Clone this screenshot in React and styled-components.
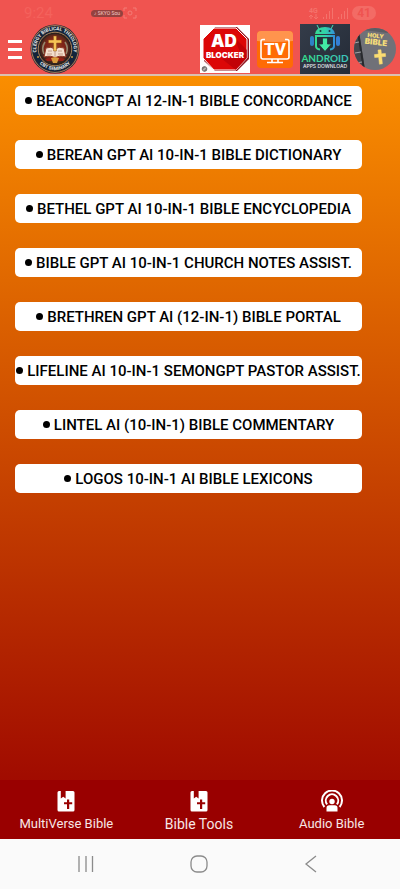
import React, { useState } from "react";
import styled, { createGlobalStyle } from "styled-components";

const tools = [
  "BEACONGPT AI 12-IN-1 BIBLE CONCORDANCE",
  "BEREAN GPT AI 10-IN-1 BIBLE DICTIONARY",
  "BETHEL GPT AI 10-IN-1 BIBLE ENCYCLOPEDIA",
  "BIBLE GPT AI 10-IN-1 CHURCH NOTES ASSIST.",
  "BRETHREN GPT AI (12-IN-1) BIBLE PORTAL",
  "LIFELINE AI 10-IN-1 SEMONGPT PASTOR ASSIST.",
  "LINTEL AI (10-IN-1) BIBLE COMMENTARY",
  "LOGOS 10-IN-1 AI BIBLE LEXICONS",
];

const SealLogo = () => (
  <svg width="50" height="50" viewBox="0 0 50 50" aria-label="Seminary seal">
    <defs>
      <path id="sealTop" d="M7.2 31 A18.8 18.8 0 1 1 42.8 31" />
      <path id="sealBottom" d="M6 35 A21.8 21.8 0 0 0 44 35" />
      <radialGradient id="sealGlow" cx="50%" cy="45%" r="55%">
        <stop offset="0" stopColor="#d99a34" />
        <stop offset="0.5" stopColor="#8a2a18" />
        <stop offset="1" stopColor="#33221c" />
      </radialGradient>
    </defs>
    <circle cx="25" cy="25" r="24.5" fill="#2b2a33" />
    <circle cx="25" cy="25" r="23.4" fill="none" stroke="#b88763" strokeWidth="0.9" />
    <circle cx="25" cy="25" r="22.4" fill="#14243a" />
    <circle cx="25" cy="25" r="16.8" fill="#2d211d" stroke="#a9825a" strokeWidth="1" />
    <circle cx="25" cy="25" r="15" fill="url(#sealGlow)" />
    <path d="M13 21 Q25 6 37 21 L34 34 H16 Z" fill="#7c2418" opacity="0.7" />
    <path d="M15 18 q-4 6 -1 12 M35 18 q4 6 1 12" fill="none" stroke="#94866c" strokeWidth="1.6" />
    <path d="M14 33 L16 24 Q21 22 25 25 Q29 22 34 24 L36 33 Q29 31 25 34 Q21 31 14 33Z" fill="#f3dfce" stroke="#8e3826" strokeWidth="1" />
    <path d="M25 25 V33 M18 27 l4 0 M17 30 l5 0 M28 27 l4 0 M28 30 l5 0" stroke="#b78975" strokeWidth="0.8" />
    <path d="M23.5 12 h3 v4 h5 v3 h-5 v8 h-3 v-8 h-5 v-3 h5z" fill="#f6c455" stroke="#92521c" strokeWidth="0.5" />
    <path d="M15 35 q10 -4 20 0 l-2 2 h-16z" fill="#942016" />
    <path d="M21 34 l4 -1 4 1 -2 5 h-4z" fill="#d99c3d" />
    <circle cx="8" cy="33" r="1" fill="#c69a4a" />
    <circle cx="42" cy="33" r="1" fill="#c69a4a" />
    <text fontSize="4.8" fontWeight="700" fill="#e8e9e6">
      <textPath href="#sealTop" startOffset="50%" textAnchor="middle">CLERGY BIBLICAL THEOLOGY</textPath>
    </text>
    <text fontSize="4.8" fontWeight="700" fill="#e8e9e6">
      <textPath href="#sealBottom" startOffset="50%" textAnchor="middle">CBT SEMINARY</textPath>
    </text>
  </svg>
);

const AdBlockerIcon = () => (
  <svg width="50" height="48" viewBox="0 0 50 48">
    <rect width="50" height="48" fill="#fff" />
    <path d="M15 2 H37 L49 14 V34 L37 46 H15 L4 36Z" fill="#8f1720" />
    <path d="M14 3 H36 L47 14 V33 L36 45 H14 L3 33 V14Z" fill="#dc0707" stroke="#fff" strokeWidth="1" />
    <path d="M34 12 L47 25 V33 L36 45 L22 34 L42 32Z" fill="#b70007" opacity="0.7" />
    <g fill="#fff" fontFamily="Inter, sans-serif" fontWeight="900" textAnchor="middle">
      <text x="24" y="22" fontSize="17">AD</text>
      <text x="25" y="33" fontSize="8">BLOCKER</text>
    </g>
    <circle cx="4.5" cy="44" r="2.4" fill="#8a8585" stroke="#453f41" strokeWidth="0.6" />
    <path d="M3 45.5 L6 42.5" stroke="#fff" strokeWidth="0.7" />
  </svg>
);

const TvIcon = () => (
  <svg width="42" height="37" viewBox="-3 0 42 37">
    <rect width="36" height="37" rx="4" fill="#ff6b04" />
    <path d="M4 0 H32 Q36 0 36 4 V10 Q18 12 0 10 V4 Q0 0 4 0Z" fill="#ff944d" />
    <path d="M8 8.5 H6 Q4 8.5 4 10.5 V26 Q4 28 6 28 H30 Q32 28 32 26 V10.5 Q32 8.5 30 8.5 H28" fill="none" stroke="#fff" strokeWidth="1.6" />
    <path d="M15 28 V31 M21 28 V31 M10 31.5 H26" stroke="#fff" strokeWidth="1.6" />
    <text x="18" y="24" fill="#fff" fontSize="17" fontWeight="800" textAnchor="middle" fontFamily="Roboto, sans-serif">TV</text>
  </svg>
);

const AndroidIcon = () => (
  <svg width="50" height="50" viewBox="0 0 50 50">
    <defs>
      <linearGradient id="droid" x1="0" x2="1">
        <stop offset="0" stopColor="#35dc91" />
        <stop offset="0.55" stopColor="#32cfac" />
        <stop offset="1" stopColor="#318edc" />
      </linearGradient>
      <linearGradient id="droidText" x1="0" x2="1">
        <stop offset="0" stopColor="#35e08a" />
        <stop offset="1" stopColor="#3cc3c0" />
      </linearGradient>
      <linearGradient id="slate" x1="0" x2="1" y2="1">
        <stop offset="0" stopColor="#343c49" />
        <stop offset="1" stopColor="#242b37" />
      </linearGradient>
    </defs>
    <rect width="50" height="50" fill="url(#slate)" />
    <path d="M19 5 L17 1 M31 5 L33 1" stroke="#46deb5" strokeWidth="1" />
    <path d="M15 10 Q16 3 25 3 Q34 3 35 10Z" fill="url(#droid)" />
    <circle cx="20.5" cy="7" r="1" fill="#243640" />
    <circle cx="29.5" cy="7" r="1" fill="#243640" />
    <rect x="10" y="12" width="4" height="10" rx="2" fill="#2d83c5" />
    <rect x="36" y="12" width="4" height="10" rx="2" fill="#347fd6" />
    <path d="M20 25.5 Q16 25 16 22 V12 H34 V22 Q34 25 30 25.5" fill="#25303c" stroke="url(#droid)" strokeWidth="2" />
    <path d="M22.5 14 H27.5 V20 H31.5 L25 27.5 L18.5 20 H22.5Z" fill="#42e9a4" stroke="#25303c" strokeWidth="0.8" />
    <text x="25" y="38" fontSize="10" fontWeight="700" fill="url(#droidText)" textAnchor="middle" fontFamily="Lato, sans-serif">ANDROID</text>
    <text x="25" y="44" fontSize="5" fontWeight="500" fill="#e5ebee" textAnchor="middle" fontFamily="Inter, sans-serif">APPS DOWNLOAD</text>
  </svg>
);

const HolyBibleIcon = () => (
  <svg width="42" height="42" viewBox="0 0 42 42">
    <defs>
      <clipPath id="round"><circle cx="21" cy="21" r="21" /></clipPath>
    </defs>
    <g clipPath="url(#round)">
      <rect width="42" height="42" fill="#707178" />
      <path d="M0 7 L5 3 L11 42 H0Z" fill="#45464c" />
      <path d="M4 4 L10 42" stroke="#292a2e" strokeWidth="2" />
      <path d="M0 15 l5 -1 M1 25 l6 -1 M2 35 l6 -1" stroke="#a0a1a5" strokeWidth="1.2" />
      <path d="M8 0 H42 V6 L9 2Z" fill="#5c5d64" />
      <g transform="rotate(6 22 14)" fill="#f4dc7a" fontWeight="900" textAnchor="middle" fontFamily="Inter, sans-serif">
        <text x="21" y="10" fontSize="6">HOLY</text>
        <text x="22" y="17" fontSize="8">BIBLE</text>
      </g>
      <path d="M24 22 l3 -.3 .4 4 4 -.3 .3 3 -4 .4 .7 7 -3 .4 -.7 -7 -4 .4 -.3 -3 4 -.5z" fill="#fbdd72" stroke="#fbdd72" strokeWidth="0.5" />
    </g>
  </svg>
);

const BookCrossIcon = () => (
  <svg width="18" height="22" viewBox="0 0 18 22">
    <path fillRule="evenodd" fill="#fff" d="M2 1 H3.8 V8.5 L6.2 6.7 L8.6 8.5 V1 H16 Q17.5 1 17.5 2.5 V20 Q17.5 21.5 16 21.5 H2 Q.5 21.5 .5 20 V2.5 Q.5 1 2 1 Z M10 9.5 V12.2 H7 V14.2 H10 V19 H12.2 V14.2 H15.2 V12.2 H12.2 V9.5 Z" />
  </svg>
);

const AudioIcon = () => (
  <svg width="22" height="22" viewBox="0 0 22 22">
    <g fill="none" stroke="#fff" strokeWidth="2">
      <path d="M3.4 17 A10 10 0 1 1 18.6 17" />
      <path d="M6.1 14.3 A6.2 6.2 0 1 1 15.9 14.3" />
    </g>
    <circle cx="11" cy="11.5" r="2.7" fill="#fff" />
    <path d="M5.5 21.5 V18 Q5.5 15.2 8.3 15.2 H13.7 Q16.5 15.2 16.5 18 V21.5Z" fill="#fff" />
  </svg>
);

const shortcuts = [
  { label: "Ad blocker", icon: <AdBlockerIcon /> },
  { label: "TV", icon: <TvIcon /> },
  { label: "Android apps download", icon: <AndroidIcon /> },
  { label: "Holy Bible", icon: <HolyBibleIcon /> },
];

const tabs = [
  { name: "MultiVerse Bible", icon: <BookCrossIcon /> },
  { name: "Bible Tools", icon: <BookCrossIcon /> },
  { name: "Audio Bible", icon: <AudioIcon /> },
];

const App = () => {
  const [active, setActive] = useState("Bible Tools");

  return (
    <Page>
      <GlobalStyle />
      <TopBar>
        <StatusBar>
          <Clock>9:24</Clock>
          <Chip>
            <span>♪ SKYO Sou</span>
            <svg width="14" height="12" viewBox="0 0 14 12" fill="none" stroke="#f47c76">
              <path d="M1 4 V1 H4 M10 1 H13 V4 M13 8 V11 H10 M4 11 H1 V8" />
              <circle cx="7" cy="6" r="2" />
            </svg>
          </Chip>
          <Signals>
            <svg width="44" height="14" viewBox="0 0 44 14" fill="#f4736c">
              <text x="1" y="7" fontSize="7" fontWeight="700">4G</text>
              <path d="M3 13 V9 M1 11 L3 9 L5 11 M8 8 V13 M6 11 L8 13 L10 11" stroke="#f4736c" fill="none" />
              <path d="M15 11h1v2h-1z M18 8h1v5h-1z M21 5h1v8h-1z M24 2h1v11h-1z M30 11h1v2h-1z M33 8h1v5h-1z M36 5h1v8h-1z M39 2h1v11h-1z" />
            </svg>
            <Battery>41</Battery>
          </Signals>
        </StatusBar>
        <Header>
          <MenuButton aria-label="Open menu">
            <i />
            <i />
            <i />
          </MenuButton>
          <SealLogo />
          <Shortcuts>
            {shortcuts.map((item) => (
              <IconLink href="#" key={item.label} aria-label={item.label}>
                {item.icon}
              </IconLink>
            ))}
          </Shortcuts>
        </Header>
      </TopBar>
      <Body>
        <ToolList>
          {tools.map((tool) => (
            <ToolButton key={tool}>
              <Dot />
              {tool}
            </ToolButton>
          ))}
        </ToolList>
        <TabBar>
          {tabs.map((tab) => (
            <Tab
              key={tab.name}
              $active={active === tab.name}
              onClick={() => setActive(tab.name)}
            >
              {tab.icon}
              <span>{tab.name}</span>
            </Tab>
          ))}
        </TabBar>
      </Body>
      <SystemBar>
        <SystemButton aria-label="Recent apps">
          <svg width="18" height="18" viewBox="0 0 18 18" stroke="#8b8b8b" strokeWidth="1.3">
            <path d="M2 1 V17 M9 1 V17 M15.5 1 V17" />
          </svg>
        </SystemButton>
        <SystemButton aria-label="Home">
          <svg width="18" height="18" viewBox="0 0 18 18" fill="none" stroke="#8b8b8b" strokeWidth="1.3">
            <rect x="1" y="1" width="16" height="16" rx="6" />
          </svg>
        </SystemButton>
        <SystemButton aria-label="Back">
          <svg width="18" height="18" viewBox="0 0 18 18" fill="none" stroke="#8b8b8b" strokeWidth="1.3">
            <path d="M13 1 L3 9 L13 17" />
          </svg>
        </SystemButton>
      </SystemBar>
    </Page>
  );
};

export default App;

const GlobalStyle = createGlobalStyle`
  * {
    box-sizing: border-box;
  }
  body {
    margin: 0;
    font-family: Roboto, "Liberation Sans", sans-serif;
  }
  button {
    font-family: inherit;
    border: none;
    background: none;
    padding: 0;
    cursor: pointer;
  }
  svg {
    display: block;
    flex-shrink: 0;
  }
`;

const Page = styled.div`
  min-height: 100vh;
  display: flex;
  flex-direction: column;
`;

const TopBar = styled.header`
  background-color: #f05450;
  border-bottom: 2px solid #dcc0b0;
`;

const StatusBar = styled.div`
  height: 24px;
  padding: 2px 24px 0 24px;
  display: grid;
  grid-template-columns: 67px 1fr auto;
  align-items: center;
`;

const Clock = styled.span`
  font-size: 15px;
  color: #f4625c;
`;

const Chip = styled.div`
  display: flex;
  align-items: center;

  & > span {
    font-size: 5px;
    line-height: 7px;
    padding: 0 3px;
    border-radius: 4px;
    color: #f5c9c5;
    background-color: #93423f;
  }
`;

const Signals = styled.div`
  display: flex;
  align-items: center;
`;

const Battery = styled.span`
  font-size: 12px;
  line-height: 14px;
  font-weight: 700;
  padding: 0 5px;
  border-radius: 7px;
  color: #ef5350;
  background-color: #f36b65;
`;

const Header = styled.div`
  height: 50px;
  padding: 0 4px 0 8px;
  display: flex;
  align-items: center;
  gap: 8px;
`;

const MenuButton = styled.button`
  width: 14px;
  display: flex;
  flex-direction: column;
  gap: 5px;

  & > i {
    height: 3px;
    width: 14px;
    background-color: white;
  }
`;

const Shortcuts = styled.nav`
  margin-left: auto;
  display: flex;
  align-items: center;
  gap: 4px;
`;

const IconLink = styled.a`
  display: block;
`;

const Body = styled.div`
  flex: 1;
  display: flex;
  flex-direction: column;
  background: linear-gradient(#fa8e00, #990000);
`;

const ToolList = styled.main`
  flex: 1;
  display: flex;
  flex-direction: column;
  gap: 25px;
  padding: 10px 38px 25px 15px;
`;

const ToolButton = styled.button`
  min-height: 29px;
  display: flex;
  align-items: center;
  justify-content: center;
  gap: 4px;
  border-radius: 5px;
  background-color: white;
  color: #000;
  font-size: 15px;
  font-weight: 500;
  white-space: nowrap;
`;

const Dot = styled.i`
  width: 7px;
  height: 7px;
  flex-shrink: 0;
  border-radius: 50%;
  background-color: #000;
`;

const TabBar = styled.nav`
  height: 59px;
  padding: 2px 2px 0 0;
  display: grid;
  grid-template-columns: repeat(3, 1fr);
  background-color: #990000;
`;

const Tab = styled.button`
  display: flex;
  flex-direction: column;
  align-items: center;
  justify-content: center;
  gap: 4px;
  color: #f8e6e6;
  font-size: ${(props) => (props.$active ? "14px" : "13px")};
`;

const SystemBar = styled.footer`
  height: 50px;
  padding: 0 32px 0 30px;
  display: grid;
  grid-template-columns: repeat(3, 1fr);
  background-color: #fafafa;
`;

const SystemButton = styled.button`
  display: grid;
  place-items: center;
`;
